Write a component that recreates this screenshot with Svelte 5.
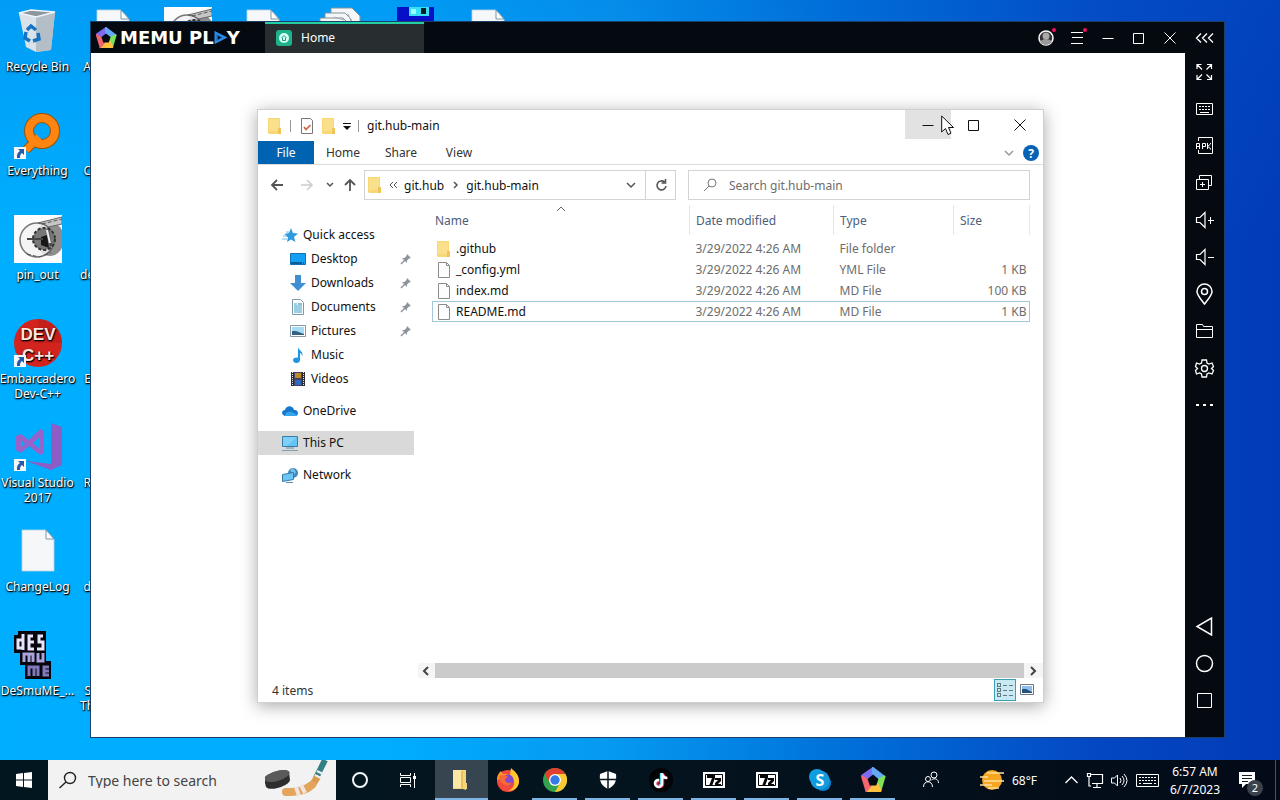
<script lang="ts">
  type Shortcut = { label: string; icon: string; link?: boolean };
  type Place = { label: string; icon: string; pinned?: boolean };
  type Entry = {
    name: string;
    icon: string;
    modified: string;
    kind: string;
    size: string;
  };

  const shortcuts: Shortcut[] = [
    { label: "Recycle Bin", icon: "bin" },
    { label: "Everything", icon: "everything", link: true },
    { label: "pin_out", icon: "photo" },
    { label: "Embarcadero Dev-C++", icon: "devcpp", link: true },
    { label: "Visual Studio 2017", icon: "vs", link: true },
    { label: "ChangeLog", icon: "page" },
    { label: "DeSmuME_...", icon: "desmume" },
  ];

  // second column is mostly covered by the emulator window
  const covered = ["A", "C", "de", "E", "R", "d", "S Th"];
  const topRow = ["photo", "page", "stack", "floppy", "page"];

  const quickAccess: Place[] = [
    { label: "Desktop", icon: "desktop", pinned: true },
    { label: "Downloads", icon: "downloads", pinned: true },
    { label: "Documents", icon: "documents", pinned: true },
    { label: "Pictures", icon: "pictures", pinned: true },
    { label: "Music", icon: "music" },
    { label: "Videos", icon: "videos" },
  ];

  const roots: Place[] = [
    { label: "OneDrive", icon: "onedrive" },
    { label: "This PC", icon: "pc" },
    { label: "Network", icon: "network" },
  ];

  const files: Entry[] = [
    { name: ".github", icon: "folder", modified: "3/29/2022 4:26 AM", kind: "File folder", size: "" },
    { name: "_config.yml", icon: "file", modified: "3/29/2022 4:26 AM", kind: "YML File", size: "1 KB" },
    { name: "index.md", icon: "file", modified: "3/29/2022 4:26 AM", kind: "MD File", size: "100 KB" },
    { name: "README.md", icon: "file", modified: "3/29/2022 4:26 AM", kind: "MD File", size: "1 KB" },
  ];

  const windowTools = ["user", "menu", "minimize", "maximize", "close"];
  const sideTools = ["fullscreen", "keys", "apk", "multi", "volup", "voldown", "pin", "files", "gear", "dots"];
  const navTools = ["back", "home", "recent"];

  const pinnedApps = [
    { name: "explorer", open: true },
    { name: "firefox", open: false },
    { name: "chrome", open: true },
    { name: "shield", open: true },
    { name: "tiktok", open: true },
    { name: "sevenzip", open: true },
    { name: "sevenzip", open: true },
    { name: "skype", open: true },
    { name: "memu", open: true },
  ];

  let current = $state("This PC");
  let selected = $state("README.md");
  let query = $state("");
  let search = $state("");
</script>

{#snippet memuLogo(size: number)}
  <svg width={size} height={size} viewBox="0 0 24 24" aria-hidden="true">
    <path d="M12 1 2 8l5 4 5-4z" fill="#7d6bf0" stroke="#7d6bf0" stroke-width="2" stroke-linejoin="round" />
    <path d="M12 1 22.500 9l-5 4L12 8z" fill="#63a8f5" stroke="#63a8f5" stroke-width="2" stroke-linejoin="round" />
    <path d="M22.500 9 19 21h-5l1-7 3-3z" fill="#7fe05a" stroke="#7fe05a" stroke-width="2" stroke-linejoin="round" />
    <path d="M19 22H6l3-6h7z" fill="#ffc23e" stroke="#ffc23e" stroke-width="2" stroke-linejoin="round" />
    <path d="M6 22 2 9l5 3 3 5z" fill="#f2666e" stroke="#f2666e" stroke-width="2" stroke-linejoin="round" />
    <path d="m12 7 5 4-2 6H9l-2-6z" fill="#050a10" />
  </svg>
{/snippet}

{#snippet desktopIcon(name: string)}
  <svg width="48" height="48" viewBox="0 0 48 48" aria-hidden="true">
    {#if name === "bin"}
      <path d="m5 6 12-3 24 2-4 38-14 2-10-5z" fill="#c9d3db" opacity=".95" />
      <path d="m5 6 17 4v35l-10-5z" fill="#d9e2e8" />
      <path d="m22 10 19-5-4 38-15 2z" fill="#b4bec7" />
      <path d="m5 6 12-3 24 2-19 5z" fill="#8b969e" stroke="#eef5fa" stroke-width="1.500" />
      <g fill="none" stroke="#1673c4" stroke-width="3.500"><path d="m13 23 4-4 5 4M24 26l1 6-6 2M16 34l-5-3 1-6" /></g>
    {:else if name === "everything"}
      <path d="m24 27-12 12" stroke="#9a5208" stroke-width="9" />
      <circle cx="28" cy="20" r="13" fill="none" stroke="#9a5208" stroke-width="10" />
      <path d="m25 26-13 13" stroke="#ff8410" stroke-width="7" />
      <circle cx="28" cy="20" r="13" fill="none" stroke="#ff8410" stroke-width="8" />
    {:else if name === "photo"}
      <path d="M0 0h48v48H0z" fill="#fcfcfc" />
      <ellipse cx="36" cy="24" rx="14" ry="17" fill="#8d8d8d" />
      <path d="m24 8 24-6v7L30 13z" fill="#c6c6c6" stroke="#666" />
      <circle cx="23" cy="25" r="17" fill="#f3f3f3" opacity=".8" stroke="#555" stroke-width="1.500" />
      <circle cx="30" cy="24" r="11" fill="#777" stroke="#333" stroke-dasharray="3 2" stroke-width="2" />
      <path d="m27 22 6-2 2 13-8-3z" fill="#181818" />
      <path d="M13 24h16M34 16l3 15" stroke="#444" stroke-width="2" /><path d="m33 15 3 13" stroke="#eee" stroke-width="2" />
      <path d="m13 39 12 3 12-4M28 9l20-5" fill="none" stroke="#555" stroke-dasharray="4 2" />
    {:else if name === "devcpp"}
      <circle cx="24" cy="24" r="24" fill="#d3231e" />
      <path d="M24 0a24 24 0 0 1 24 24L24 24z" fill="#b81c1a" opacity=".5" />
      <g fill="#ffe5dc" font-family="Liberation Sans, sans-serif" font-weight="700" font-size="17">
        <text x="24" y="21" text-anchor="middle">DEV</text><text x="24" y="42" text-anchor="middle">C++</text>
      </g>
    {:else if name === "vs"}
      <path d="m37 0 11 4v38l-11 5-25-9 25 3z" fill="#8d5cc4" />
      <path d="M2 13 7 11l8 6 11-11 4 2v22l-4 2-11-9-8 7-5-3zM7 17v7l4-3zM26 14l-7 6 7 6z" fill="#9563c9" fill-rule="evenodd" />
    {:else if name === "page"}
      <path d="M8 3h24l8 9v32H8z" fill="#f6f7f8" stroke="#bfd3e0" stroke-width=".8" />
      <path d="M32 3v9h8z" fill="#fff" stroke="#7896a8" />
    {:else if name === "stack"}
      <g fill="#f5f6f7" stroke="#7d93a0"><path d="M17 1h21l8 8v30H17z" /><path d="M11 6h20l6 6v30H11z" /><path d="M6 11h23l5 5v30H6z" /></g>
      <path d="m20 10 10 3M34 7l3 7M24 15h9" stroke="#aaa" />
    {:else if name === "floppy"}
      <path d="M8 0h37v37H8z" fill="#0710c8" /><path d="M20 0h20v9H20z" fill="#35dff5" /><path d="M32 1h5v6h-5z" fill="#022" /><path d="M22 2h5v5h-5z" fill="#9ff" />
    {:else if name === "desmume"}
      <path d="M4 0h28v17h0v13h5v18H11V34H6V22H0V4h4z" fill="#06060c" />
      <g fill="none" stroke="#e6e4fa" stroke-width="3"><path d="M9 3v16M8 9H4v8h4M19 5h-4v13h5M15 11h5M29 5h-4v6h4v7h-6" /></g>
      <g fill="none" stroke="#aaa4dc" stroke-width="3"><path d="M10 31v-8h9v8M15 23v8M24 22v8h5v-8" /></g>
      <g fill="none" stroke="#8079bd" stroke-width="3"><path d="M15 45v-9h9v9M20 36v9M35 36h-5v8h5M30 40h5" /></g>
    {/if}
  </svg>
{/snippet}

{#snippet smallIcon(name: string)}
  <svg width="16" height="16" viewBox="0 0 16 16" aria-hidden="true">
    {#if name === "folder"}
      <path d="M1 0h12v12l1 1v3H2l-1-1z" fill="#f8d775" /><path d="M2 1h10v12H2z" fill="#fbe08c" /><path d="M11 10h3v6h-3z" fill="#f0c35b" />
    {:else if name === "file"}
      <path d="M2.500.5h8l3 3v12h-11z" fill="#fdfdfd" stroke="#8c8c8c" /><path d="M10.500.5v3h3" fill="none" stroke="#8c8c8c" />
    {:else if name === "props"}
      <path d="M2.500.5h9l2 2v13h-11z" fill="#fdfdfd" stroke="#777" /><path d="m5 9 2 2.500L11.500 7" fill="none" stroke="#d2643c" stroke-width="1.700" />
    {:else if name === "star"}
      <path d="m9 1 2 5 5 .5-4 3.500 1.500 5L9 12.500 5 15l1-4.500L2.500 7 7 6z" fill="#2e9be0" /><path d="M1 9h4M0 12h5M4 5h3" stroke="#71c0ee" />
    {:else if name === "desktop"}
      <path d="M.5 2.500h15v11H.5z" fill="#14a0f2" stroke="#1173b5" /><path d="M1 12h14" stroke="#0d5c9a" stroke-width="2" stroke-dasharray="11 1 1 1" />
    {:else if name === "downloads"}
      <path d="M5 0h6v8h5l-8 8-8-8h5z" fill="#3f8fd4" />
    {:else if name === "documents"}
      <path d="M2.500.5h8l3 3v12h-11z" fill="#fcfdfe" stroke="#7f98a8" /><path d="M4 5h3M4 7h8M4 9h8M4 11h8M4 13h8" stroke="#3aa0c6" /><path d="M8 5h4" stroke="#2d7f9e" />
    {:else if name === "pictures"}
      <path d="M.5 2.500h15v11H.5z" fill="#fff" stroke="#8798a5" /><path d="M2 4h12v8H2z" fill="#a6dcf3" /><path d="m2 8 4 0 8 3v1H2z" fill="#37617e" />
    {:else if name === "music"}
      <path d="M8 0c1 4 6 4 4 10 0-3-1-4-2-4v7c0 4-7 4-7 0 0-2 3-3 5-2z" fill="#1e94e3" />
    {:else if name === "videos"}
      <path d="M1 1h14v14H1z" fill="#2b2b33" /><path d="M4 1h8v14H4z" fill="#4a3d66" /><path d="M5 2h6v5H5z" fill="#b98b25" /><path d="M5 9h6v5H5z" fill="#2b6bc0" /><path d="M2.500 1v14M13.500 1v14" stroke="#e8e8e8" stroke-dasharray="1 1" />
    {:else if name === "onedrive"}
      <path d="M4 13C-1 13-1 7 3 7c1-5 8-5 9 0 5-1 5 6 1 6z" fill="#1479cd" /><path d="M3 13c0-4 4-5 7-4l5 3c0 1-1 1-2 1z" fill="#35a6ee" />
    {:else if name === "pc"}
      <path d="M.5 1.500h15v10H.5z" fill="#63c3f6" stroke="#3a7ea8" /><path d="M1 2h14L5 11H1z" fill="#92d9fb" opacity=".6" /><path d="M4 13h8" stroke="#6a8ea5" /><path d="M0 15.500h16" stroke="#7f9fb3" />
    {:else if name === "network"}
      <circle cx="11" cy="6" r="5" fill="#4288bd" /><path d="m8 3 3-2 3 4-2 3z" fill="#79bfe6" /><path d="m.5 7.500 11-2v7l-11 2z" fill="#6cc5f5" stroke="#347ca8" /><path d="M4 15.500h7" stroke="#5b8ba8" />
    {:else if name === "thumb"}
      <path d="M1.500 2.500h13v10h-13z" fill="#fff" stroke="#68788a" /><path d="M3 4h10v7H3z" fill="#8bc0ee" /><path d="m3 7 4 0 6 3v1H3z" fill="#245276" />
    {:else if name === "details"}
      <g fill="none" stroke="#62777f" shape-rendering="crispEdges"><path d="M.5 1.500h3v3h-3zM.5 6.500h3v3h-3zM.5 11.500h3v3h-3z" /><path d="M6 3.500h4M6 8.500h4M6 13.500h4M12 3.500h4M12 8.500h4M12 13.500h4" /></g>
    {/if}
  </svg>
{/snippet}

{#snippet lineIcon(name: string)}
  <svg class="line-icon" width="20" height="20" viewBox="0 0 20 20" aria-hidden="true">
    {#if name === "user"}
      <circle cx="10" cy="10" r="7" fill="#333" stroke-width="1.500" /><circle cx="10" cy="8" r="3.500" fill="#aaa" stroke="none" /><path d="M4 14c2-4 10-4 12 0-3 4-9 4-12 0z" fill="#999" stroke="none" /><circle cx="18" cy="2" r="2" fill="#ef1261" stroke="none" />
    {:else if name === "menu"}
      <path d="M4 4.500h12M5 9.500h11M4 15.500h12" /><circle cx="18" cy="2" r="2" fill="#ef1261" stroke="none" />
    {:else if name === "minimize"}
      <path d="M4.500 10.500h11" />
    {:else if name === "maximize"}
      <path d="M4.500 5.500h10v10h-10z" />
    {:else if name === "close"}
      <path d="m4.500 4.500 11 11m0-11-11 11" />
    {:else if name === "collapse"}
      <path d="M6 5.500 1.500 10 6 14.500M12 5.500 7.500 10l4.500 4.500M18 5.500 13.500 10l4.500 4.500" stroke-width="1.300" />
    {:else if name === "fullscreen"}
      <path d="M3 7V2.500h4.500M3 2.500l5 5M13 2.500h4.500V7m0-4.500-5 5M3 13v4.500h4.500M3 17.500l5-5M13 17.500h4.500V13m0 4.500-5-5" stroke-width="1.200" />
    {:else if name === "keys"}
      <path d="M2.500 4.500h16v11h-16z" /><path d="M5 7.500h11M5 10.500h11" stroke-dasharray="2 1" /><path d="M6 13.500h9" />
    {:else if name === "apk"}
      <path d="M4.500 5V1.500h14v16h-14V14" /><path d="M2.500 13V7.500h3V13M2.500 10.500h3M8.500 13V7.500h3v3h-3M13.500 7v6m3-6v1l-3 2.500 3 2v1" />
    {:else if name === "multi"}
      <path d="M5.500 6V2.500h12v10h-3M2.500 6.500h12v10h-12zM6 11.500h5M8.500 9v5" />
    {:else if name === "volup" || name === "voldown"}
      <path d="M2.500 7.500H6l5-5v15l-5-5H2.500z" stroke-width="1.200" /><path d="M14 10.500h6" />
      {#if name === "volup"}<path d="M16.500 7v7" />{/if}
    {:else if name === "pin"}
      <path d="M10.500 20C5 13 3 11 3 7.500a7.500 7.500 0 0 1 15 0c0 3.500-2 5.500-7.500 12.500z" stroke-width="1.500" /><circle cx="10.500" cy="7.500" r="3" stroke-width="1.500" />
    {:else if name === "files"}
      <path d="M2.500 3.500h6l1 2h9v11h-16zM2.500 8.500h16" />
    {:else if name === "gear"}
      <path d="M8 2h4.500l.5 3 2 1 3-1 1.500 3.500-2 2 2 2L18 16l-3-1-2 1-.5 3H8l-.5-3-2-1-3 1L1.500 12.500l2-2-2-2L2.500 5l3 1 2-1z" stroke-width="1.300" /><circle cx="10.500" cy="10.500" r="3" stroke-width="1.300" />
    {:else if name === "dots"}
      <path d="M2 10h3m4 0h3m4 0h3" stroke-width="2" />
    {:else if name === "back"}
      <path d="M17.500 2v17L3 10.500z" stroke-width="1.500" />
    {:else if name === "home"}
      <circle cx="10.500" cy="10.500" r="8" stroke-width="1.500" />
    {:else if name === "recent"}
      <path d="M3.500 3.500h14v14h-14z" />
    {:else if name === "down"}
      <path d="m6 8 4 4 4-4" stroke-width="1.500" />
    {:else if name === "small-down"}
      <path d="m7 8 3 3 3-3" stroke-width="1.500" />
    {:else if name === "left"}
      <path d="m11 6-4 4 4 4" stroke-width="2" />
    {:else if name === "right"}
      <path d="m8 6 4 4-4 4" stroke-width="2" />
    {:else if name === "arrow-left"}
      <path d="M16 10H5m5-5-5 5 5 5" stroke-width="1.800" />
    {:else if name === "arrow-right"}
      <path d="M4 10h11m-5-5 5 5-5 5" stroke-width="1.500" />
    {:else if name === "arrow-up"}
      <path d="M10 16V5m-5 5 5-5 5 5" stroke-width="1.800" />
    {:else if name === "refresh"}
      <path d="M13.500 7A4.500 4.500 0 1 0 15 11M14.500 4v4h-4" stroke-width="1.600" />
    {:else if name === "search"}
      <circle cx="12" cy="8" r="4" /><path d="m9 11-5 5" />
    {:else if name === "lens"}
      <circle cx="12" cy="8" r="5.500" stroke-width="1.400" /><path d="m8 12-6.500 6" stroke-width="1.400" />
    {:else if name === "chevrons"}
      <path d="M10 7 7 10l3 3M14 7l-3 3 3 3" />
    {:else if name === "crumb"}
      <path d="m9 7 3 3-3 3" stroke-width="1.500" />
    {:else if name === "tray-up"}
      <path d="m4.500 13 6-6 6 6" stroke-width="1.300" />
    {:else if name === "wired"}
      <path d="M5 4.500h12.500v9H7M12 14v3M8 17.500h8M2.500 3.500h3v3h-3zM4 7v9h2" stroke-width="1.200" />
    {:else if name === "sound"}
      <path d="M2.500 8h3l3-3v11l-3-3h-3zM11 8q2 2.500 0 5M13 6q4 4.500 0 9M15 4q6 6.500 0 13" />
    {:else if name === "people"}
      <circle cx="7" cy="9" r="2.500" /><path d="M2.500 17c0-7 9-7 9 0" /><circle cx="13" cy="5" r="3" /><path d="M10.500 10c3-2.500 7-1 7 3" />
    {/if}
  </svg>
{/snippet}

{#snippet appIcon(name: string)}
  {#if name === "memu"}
    {@render memuLogo(26)}
  {:else}
    <svg width="24" height="24" viewBox="0 0 24 24" aria-hidden="true">
      {#if name === "explorer"}
        <path d="M3 2h13v20l-3-1H3z" fill="#f3d37b" /><path d="M3 2h9v18H3z" fill="#fae7a6" /><path d="M11 3h2v17l-2 1z" fill="#e8bf5b" /><path d="M15 15h2v6h-2z" fill="#f3d37b" />
      {:else if name === "firefox"}
        <circle cx="12" cy="13" r="11" fill="#f5483c" /><path d="M15 0c3 3 8 6 8 13S17 23 12 23c8-3 8-12 2-16z" fill="#ffc62e" /><path d="M1 12C1 7 3 5 5 3l2 3h5l-4 4z" fill="#ff962b" /><circle cx="12" cy="12" r="5.500" fill="#8349cb" /><path d="M3 8c3-2 7-1 9 1l-3 2c0 4 4 5 7 3-2 6-12 5-13-6z" fill="#f86a35" />
      {:else if name === "chrome"}
        <circle cx="12" cy="12" r="12" fill="#33a350" /><path d="M1.600 6A12 12 0 0 1 22.400 6H12L7 15z" fill="#e0402f" /><path d="M22.400 6A12 12 0 0 1 12 24l5-9-5-9z" fill="#f9c932" /><circle cx="12" cy="12" r="6" fill="#fff" /><circle cx="12" cy="12" r="4.700" fill="#3579e6" />
      {:else if name === "shield"}
        <path d="m12 3 8 3c1 8-2 12-8 15C6 18 3 14 4 6z" fill="#fff" /><path d="M12 2v20M2 11.500h20" stroke="#07141c" stroke-width="1.500" />
      {:else if name === "tiktok"}
        <circle cx="12" cy="12" r="12" fill="#020305" /><g fill="none" stroke-width="2.500"><path d="M12 5v10a3 3 0 1 1-3-3" stroke="#20dbe2" /><path d="M14 6v10a3 3 0 1 1-3-3M14 6c1 3 3 4 5 4" stroke="#ee2452" /><path d="M13 5v11a3.500 3.500 0 1 1-3-4M13 6c1 3 3 4 5 4" stroke="#fff" /></g>
      {:else if name === "sevenzip"}
        <path d="M1 4h22v16H1z" fill="#fff" /><path d="M3.500 6.500h17v11h-17z" fill="none" stroke="#080808" /><path d="M5 7h8v3l-3 8H7l3-8H5zM13 10h6v3l-3 3h3v2h-6v-3l3-3h-3z" fill="#080808" />
      {:else if name === "skype"}
        <circle cx="9" cy="9" r="8" fill="#0aa2e2" /><circle cx="15" cy="15" r="8" fill="#0782cf" /><circle cx="12" cy="12" r="9.500" fill="#129bdd" /><text x="12" y="18" text-anchor="middle" fill="#fff" font-family="Open Sans, sans-serif" font-size="16" font-weight="700">S</text>
      {/if}
    </svg>
  {/if}
{/snippet}

<div class="screen">
  <main class="desktop">
    <div class="icons">
      <div class="column">
        {#each shortcuts as item (item.label)}
          <button class="shortcut">
            <span class="art">
              {@render desktopIcon(item.icon)}
              {#if item.link}
                <svg class="link" width="12" height="12" viewBox="0 0 12 12" aria-hidden="true">
                  <path d="M0 0h12v12H0z" fill="#f4f8fc" /><path d="M4 2h6v6L8 6c-2 1-2 3-2 5H3c0-3 0-5 3-7z" fill="#2659a8" />
                </svg>
              {/if}
            </span>
            <span>{item.label}</span>
          </button>
        {/each}
      </div>
      <div class="column narrow">
        {#each covered as label, index (label)}
          <button class="shortcut">
            <span class="art">{#if index === 0}{@render desktopIcon("page")}{/if}</span>
            <span>{label}</span>
          </button>
        {/each}
      </div>
      {#each topRow as name, index (index)}
        <div class="column">
          <span class="shortcut">{@render desktopIcon(name)}</span>
        </div>
      {/each}
    </div>

    <section class="emulator">
      <header class="emu-bar">
        <div class="brand">
          {@render memuLogo(22)}
          <span>MEMU PL</span>
          <svg width="13" height="13" viewBox="0 0 13 13" aria-hidden="true"><path d="M1.500 1.500v10l10-5z" fill="#1764b8" stroke="#2c8be8" stroke-width="2" /><path d="m4 5 3 1.500-3 2z" fill="#06101c" /></svg>
          <span>Y</span>
        </div>
        <button class="emu-tab">
          <svg width="16" height="16" viewBox="0 0 16 16" aria-hidden="true"><rect width="16" height="16" rx="3" fill="#1eb28c" /><circle cx="8" cy="8" r="5" fill="#d8fff3" /><path d="m5.500 8 2.500-2.500L10.500 8M6.500 8v2.500h3V8" fill="none" stroke="#1b9d7c" /></svg>
          Home
        </button>
        <div class="emu-tools">
          {#each windowTools as name (name)}
            <button aria-label={name}>{@render lineIcon(name)}</button>
          {/each}
          <button class="wide" aria-label="collapse">{@render lineIcon("collapse")}</button>
        </div>
      </header>

      <div class="emu-body">
        <div class="emu-stage">
          <section class="explorer">
            <header class="titlebar">
              {@render smallIcon("folder")}
              <i class="rule"></i>
              {@render smallIcon("props")}
              {@render smallIcon("folder")}
              <svg class="drop" width="8" height="8" viewBox="0 0 8 8" aria-hidden="true"><path d="M0 1.500h8" stroke="#111" /><path d="M0 4h8L4 8z" fill="#111" /></svg>
              <i class="rule"></i>
              <span>git.hub-main</span>
              <div class="controls">
                <button class="hovered" aria-label="Minimize">{@render lineIcon("minimize")}</button>
                <button aria-label="Maximize">{@render lineIcon("maximize")}</button>
                <button aria-label="Close">{@render lineIcon("close")}</button>
              </div>
            </header>

            <nav class="ribbon">
              <button class="file">File</button>
              <button>Home</button>
              <button>Share</button>
              <button>View</button>
              <button class="expand" aria-label="Expand ribbon">{@render lineIcon("down")}</button>
              <button class="help" aria-label="Help">?</button>
            </nav>

            <div class="address-row">
              <div class="history">
                <button aria-label="Back">{@render lineIcon("arrow-left")}</button>
                <button class="off" aria-label="Forward">{@render lineIcon("arrow-right")}</button>
                <button class="recent" aria-label="Recent locations">{@render lineIcon("small-down")}</button>
                <button aria-label="Up">{@render lineIcon("arrow-up")}</button>
              </div>
              <div class="address">
                {@render smallIcon("folder")}
                {@render lineIcon("chevrons")}
                <button class="crumb">git.hub</button>
                {@render lineIcon("crumb")}
                <button class="crumb">git.hub-main</button>
                <button class="more" aria-label="Previous locations">{@render lineIcon("down")}</button>
                <button class="refresh" aria-label="Refresh">{@render lineIcon("refresh")}</button>
              </div>
              <label class="find">
                {@render lineIcon("search")}
                <input bind:value={query} placeholder="Search git.hub-main" aria-label="Search git.hub-main" />
              </label>
            </div>

            <div class="panes">
              <nav class="tree">
                <button class="place">{@render smallIcon("star")}Quick access</button>
                {#each quickAccess as place (place.label)}
                  <button class="place child" class:active={current === place.label} onclick={() => (current = place.label)}>
                    {@render smallIcon(place.icon)}{place.label}
                    {#if place.pinned}
                      <svg class="pinned" width="12" height="12" viewBox="0 0 12 12" aria-hidden="true"><path d="m7 1 4 4-2 .5-2 2V10L2 5h2.500l2-2z" fill="#8b949c" /><path d="m5 7-4 4" stroke="#8b949c" stroke-width="1.500" /></svg>
                    {/if}
                  </button>
                {/each}
                {#each roots as place (place.label)}
                  <button class="place root" class:active={current === place.label} onclick={() => (current = place.label)}>
                    {@render smallIcon(place.icon)}{place.label}
                  </button>
                {/each}
              </nav>

              <div class="listing">
                <table>
                  <colgroup><col /><col class="c-date" /><col class="c-type" /><col class="c-size" /></colgroup>
                  <thead>
                    <tr>
                      <th>Name <svg class="sort" width="10" height="6" viewBox="0 0 10 6" aria-hidden="true"><path d="m1 5 4-4 4 4" fill="none" stroke="#666" /></svg></th>
                      <th>Date modified</th>
                      <th>Type</th>
                      <th>Size</th>
                    </tr>
                  </thead>
                  <tbody>
                    {#each files as file (file.name)}
                      <tr class:selected={selected === file.name} onclick={() => (selected = file.name)}>
                        <td><span class="name">{@render smallIcon(file.icon)}{file.name}</span></td>
                        <td>{file.modified}</td>
                        <td>{file.kind}</td>
                        <td class="size">{file.size}</td>
                      </tr>
                    {/each}
                  </tbody>
                </table>
                <div class="scrollbar">
                  <button aria-label="Scroll left">{@render lineIcon("left")}</button>
                  <div class="thumb"></div>
                  <button aria-label="Scroll right">{@render lineIcon("right")}</button>
                </div>
              </div>
            </div>

            <footer class="status">
              <span>4 items</span>
              <button class="view on" aria-label="Details view">{@render smallIcon("details")}</button>
              <button class="view" aria-label="Thumbnail view">{@render smallIcon("thumb")}</button>
            </footer>

            <svg class="cursor" width="13" height="21" viewBox="0 0 13 21" aria-hidden="true">
              <path d="M.7 1v16l3.800-3.500L7 19.500l3-1.300-2.500-5.700h5z" fill="#fff" stroke="#111" />
            </svg>
          </section>
        </div>

        <aside class="emu-side">
          {#each sideTools as name (name)}
            <button aria-label={name}>{@render lineIcon(name)}</button>
          {/each}
          <div class="spacer"></div>
          {#each navTools as name (name)}
            <button aria-label={name}>{@render lineIcon(name)}</button>
          {/each}
        </aside>
      </div>
    </section>
  </main>

  <footer class="taskbar">
    <button class="slot" aria-label="Start">
      <svg width="16" height="16" viewBox="0 0 16 16" aria-hidden="true"><path d="m0 2 7-1v6.500H0zM8 1l8-1v7.500H8zM0 8.500h7V15l-7-1zM8 8.500h8V16l-8-1z" fill="#fff" /></svg>
    </button>
    <label class="search">
      {@render lineIcon("lens")}
      <input bind:value={search} placeholder="Type here to search" aria-label="Type here to search" />
      <svg width="68" height="40" viewBox="0 0 68 40" aria-hidden="true">
        <path d="M-1 19c0-5 22-12 25-7l1 8c-1 6-20 12-24 7z" fill="#2d2d2e" /><ellipse cx="12" cy="16" rx="13" ry="5" transform="rotate(-16 12 16)" fill="#5b5a5b" />
        <path d="M60 0 51 18" stroke="#357f87" stroke-width="6" /><path d="M53 16 48 24 38 30" fill="none" stroke="#d99b50" stroke-width="7" />
        <path d="M47 25q-9 8-26 7" fill="none" stroke="#e3a45c" stroke-width="8" stroke-linecap="round" /><path d="m31 27 3 9M36 25l4 8" stroke="#f1e3dd" stroke-width="4" /><path d="m52 11 6 3M50 15l6 3" stroke="#eee" stroke-width="2" />
      </svg>
    </label>
    <button class="slot" aria-label="Cortana">
      <svg width="18" height="18" viewBox="0 0 18 18" aria-hidden="true"><circle cx="9" cy="9" r="7" fill="none" stroke="#f2f5f6" stroke-width="2" /></svg>
    </button>
    <button class="slot" aria-label="Task view">
      <svg width="18" height="18" viewBox="0 0 18 18" aria-hidden="true"><path d="M1.500 2v2.500h10V2M1.500 16v-2.500h10V16M1.500 6.500h10v5h-10zM15.500 2v15" fill="none" stroke="#fff" /><path d="M14 5h3v3h-3z" fill="#fff" /></svg>
    </button>
    <div class="apps">
      {#each pinnedApps as app, index (index)}
        <button class="app" class:open={app.open} class:front={app.name === "explorer"} aria-label={app.name}>{@render appIcon(app.name)}</button>
      {/each}
    </div>
    <button class="slot people" aria-label="People">{@render lineIcon("people")}</button>
    <button class="weather">
      <svg width="24" height="24" viewBox="0 0 24 24" aria-hidden="true"><circle cx="12" cy="12" r="10" fill="#f6a71f" /><path d="M7 5h17M0 9h8M4 13h20M0 17h12M8 20h11" stroke="#ffe1a0" stroke-width="1.500" /></svg>
      68°F
    </button>
    <button class="tray" aria-label="Hidden icons">{@render lineIcon("tray-up")}</button>
    <button class="tray" aria-label="Network">{@render lineIcon("wired")}</button>
    <button class="tray" aria-label="Volume">{@render lineIcon("sound")}</button>
    <button class="tray touch" aria-label="Touch keyboard">
      <svg width="23" height="13" viewBox="0 0 23 13" aria-hidden="true"><g fill="none" stroke="#fff"><path d="M.5.5h22v12H.5z" /><path d="M3 3.500h17M3 6.500h17" stroke-dasharray="2 1" /><path d="M3 9.500h2M7 9.500h9M18 9.500h2" /></g></svg>
    </button>
    <button class="clock"><span>6:57 AM</span><span>6/7/2023</span></button>
    <button class="slot notices" aria-label="Notifications">
      <svg width="18" height="18" viewBox="0 0 18 18" aria-hidden="true"><path d="M1 1h16v12H8l-4 4v-4H1z" fill="#fff" /><path d="M4 4.500h10M4 7.500h10M4 10.500h6" stroke="#111c24" /></svg>
      <span class="badge">2</span>
    </button>
    <button class="peek" aria-label="Show desktop"></button>
  </footer>
</div>

<style>
  :global(body) {
    margin: 0;
  }

  .screen {
    height: 100vh;
    display: flex;
    flex-direction: column;
    overflow: hidden;
    font-family: "Noto Sans", "Open Sans", sans-serif;
    font-size: 12px;
    line-height: 15px;
    color: #111;
  }

  button,
  input {
    border: 0;
    padding: 0;
    background: none;
    color: inherit;
    font: inherit;
  }

  input {
    min-width: 0;
    outline: none;
  }

  svg {
    display: block;
    flex: none;
  }

  .line-icon {
    fill: none;
    stroke: currentColor;
    overflow: visible;
  }

  .desktop {
    position: relative;
    flex: 1;
    min-height: 0;
    overflow: hidden;
    background:
      linear-gradient(180deg, rgb(0 95 210 / 0.22), transparent 32%),
      linear-gradient(90deg, #00aeff 0%, #00adff 30%, #0699f0 48%, #0070d9 66%, #0447c3 86%, #023bb7 100%);
  }

  .icons {
    display: flex;
    padding-top: 7px;
  }

  .column {
    width: 75px;
    flex: none;
  }

  .shortcut {
    width: 100%;
    height: 104px;
    display: flex;
    flex-direction: column;
    align-items: center;
    gap: 4px;
    color: #fff;
    text-shadow:
      0 1px 2px #000,
      1px 1px 1px #000;
  }

  .art {
    position: relative;
    min-height: 48px;
  }

  .link {
    position: absolute;
    left: 0;
    bottom: 0;
  }

  .narrow .shortcut > span:last-child {
    width: 11px;
    align-self: flex-start;
    margin-left: 5px;
    text-align: right;
  }

  .emulator {
    position: absolute;
    inset: 21px 55px 22px 90px;
    display: flex;
    flex-direction: column;
    border: 1px solid #1b3f66;
    background: #050a10;
    color: #fff;
  }

  .emu-bar {
    height: 31px;
    flex: none;
    display: flex;
  }

  .brand {
    width: 174px;
    display: flex;
    align-items: center;
    padding-left: 4px;
    box-sizing: border-box;
    font: 700 18px/20px "DejaVu Sans", sans-serif;
  }

  .brand svg:first-child {
    margin-right: 3px;
  }

  .emu-tab {
    width: 159px;
    display: flex;
    align-items: center;
    gap: 9px;
    padding: 0 0 2px 11px;
    box-sizing: border-box;
    border-top: 2px solid #24cfa6;
    background: #282d30;
  }

  .emu-tools {
    margin-left: auto;
    display: flex;
  }

  .emu-tools button {
    width: 31px;
    display: grid;
    place-items: center;
  }

  .emu-tools .wide {
    width: 39px;
  }

  .emu-body {
    flex: 1;
    min-height: 0;
    display: flex;
  }

  .emu-stage {
    position: relative;
    flex: 1;
    overflow: hidden;
    background: #fff;
    color: #111;
  }

  .emu-side {
    width: 38px;
    display: flex;
    flex-direction: column;
    padding: 0 1px 19px 0;
  }

  .emu-side button {
    height: 37px;
    display: grid;
    place-items: center;
    align-content: center;
  }

  .spacer {
    flex: 1;
  }

  .explorer {
    position: absolute;
    inset: 56px 141px 34px 166px;
    display: flex;
    flex-direction: column;
    border: 1px solid #d0d0d0;
    box-sizing: border-box;
    background: #fff;
    box-shadow: 0 3px 16px rgb(0 0 0 / 0.34);
  }

  .titlebar {
    height: 31px;
    flex: none;
    display: flex;
    align-items: center;
    padding-left: 9px;
  }

  .rule {
    width: 1px;
    height: 12px;
    margin: 0 8px 0 7px;
    background: #999;
  }

  .titlebar > svg + svg {
    margin-left: 6px;
  }

  .controls {
    margin-left: auto;
    align-self: stretch;
    display: flex;
  }

  .controls button {
    width: 46px;
    height: 29px;
    display: grid;
    place-items: center;
  }

  .controls .hovered {
    background: #e2e2e2;
  }

  .ribbon {
    height: 23px;
    flex: none;
    display: flex;
    border-bottom: 1px solid #dcdcdc;
    color: #333;
  }

  .ribbon button {
    width: 58px;
  }

  .ribbon .file {
    width: 56px;
    background: #0063b1;
    color: #fff;
  }

  .ribbon .expand {
    width: 20px;
    margin-left: auto;
    color: #999;
  }

  .ribbon .help {
    width: 16px;
    height: 16px;
    margin: 4px 4px 0 4px;
    border-radius: 50%;
    background: #0a62b5;
    color: #fff;
    font-weight: 700;
  }

  .address-row {
    flex: none;
    display: flex;
    align-items: center;
    padding: 5px 13px 5px 9px;
  }

  .history {
    width: 97px;
    display: flex;
    align-items: center;
    color: #555;
  }

  .history .off {
    margin: 0 3px 0 10px;
    color: #ccc;
  }

  .address {
    flex: 1;
    height: 28px;
    display: flex;
    align-items: center;
    padding-left: 2px;
    border: 1px solid #d3d3d3;
    color: #555;
  }

  .crumb {
    padding: 0 1px;
    color: #111;
  }

  .more {
    margin-left: auto;
  }

  .refresh {
    align-self: stretch;
    width: 30px;
    display: grid;
    place-items: center;
    margin-left: 4px;
    border-left: 1px solid #d3d3d3;
  }

  .find {
    width: 342px;
    height: 30px;
    display: flex;
    align-items: center;
    gap: 9px;
    margin-left: 12px;
    padding-left: 11px;
    box-sizing: border-box;
    border: 1px solid #d3d3d3;
    color: #777;
  }

  .find input {
    flex: 1;
  }

  .find input::placeholder {
    color: #6d6d6d;
    opacity: 1;
  }

  .panes {
    flex: 1;
    min-height: 0;
    display: flex;
  }

  .tree {
    width: 156px;
    padding-top: 18px;
  }

  .place {
    width: 100%;
    height: 24px;
    display: flex;
    align-items: center;
    gap: 5px;
    padding: 0 0 1px 24px;
  }

  .place.child {
    padding-left: 32px;
  }

  .place.root {
    margin-top: 8px;
  }

  .place.active {
    background: #d9d9d9;
  }

  .pinned {
    margin: 0 2px 0 auto;
  }

  .listing {
    flex: 1;
    min-width: 0;
    display: flex;
    flex-direction: column;
    justify-content: space-between;
    margin-left: 4px;
  }

  table {
    margin: 0 13px 0 14px;
    table-layout: fixed;
    border-collapse: collapse;
    color: #6d6d6d;
  }

  .c-date {
    width: 144px;
  }

  .c-type {
    width: 120px;
  }

  .c-size {
    width: 76px;
  }

  th {
    position: relative;
    height: 30px;
    padding: 0 0 0 6px;
    border-right: 1px solid #e6e6e6;
    color: #4c607a;
    font-weight: 400;
    text-align: left;
  }

  th:first-child {
    padding-left: 3px;
  }

  .sort {
    position: absolute;
    top: 1px;
    left: calc(50% - 5px);
  }

  tbody::before {
    content: "";
    display: block;
    height: 3px;
  }

  td {
    height: 21px;
    padding: 0 0 0 6px;
  }

  td:first-child {
    padding-left: 4px;
    color: #111;
  }

  td.size {
    padding-right: 3px;
    text-align: right;
  }

  tr.selected {
    outline: 1px solid #9fc9d6;
    outline-offset: -1px;
  }

  .name {
    display: flex;
    align-items: center;
    gap: 4px;
  }

  .scrollbar {
    height: 15px;
    display: flex;
    padding-right: 2px;
    background: #f5f5f5;
    color: #444;
  }

  .scrollbar button {
    width: 17px;
    height: 15px;
    display: flex;
    align-items: center;
    justify-content: center;
  }

  .thumb {
    flex: 1;
    background: #cbcbcb;
  }

  .status {
    height: 24px;
    flex: none;
    display: flex;
    align-items: center;
    padding: 0 5px 0 14px;
    color: #333;
  }

  .status span {
    margin-right: auto;
  }

  .view {
    width: 22px;
    height: 22px;
    display: grid;
    place-items: center;
  }

  .view.on {
    border: 1px solid #3aa1b4;
    background: #c9eaf5;
  }

  .cursor {
    position: absolute;
    top: 5px;
    right: 89px;
  }

  .taskbar {
    height: 40px;
    flex: none;
    display: flex;
    align-items: stretch;
    background: linear-gradient(90deg, #02161f, #04141e 50%, #030a18);
    color: #fff;
  }

  .slot {
    width: 48px;
    display: grid;
    place-items: center;
  }

  .search {
    width: 288px;
    display: flex;
    align-items: center;
    gap: 10px;
    padding: 0 3px 0 10px;
    box-sizing: border-box;
    background: #f2f2f2;
    color: #222;
    font-size: 14px;
  }

  .search input {
    flex: 1;
  }

  .search input::placeholder {
    color: #444;
    opacity: 1;
  }

  .apps {
    display: flex;
    margin-left: 3px;
  }

  .app {
    width: 40px;
    display: grid;
    place-items: center;
  }

  .app.open {
    width: 53px;
    background: linear-gradient(#7db4e6, #7db4e6) center bottom / 45px 2px no-repeat;
  }

  .app.front {
    background: linear-gradient(#7db4e6, #7db4e6) center bottom / 53px 2px no-repeat #36454f;
  }

  .people {
    margin: 0 16px 0 auto;
  }

  .weather {
    width: 88px;
    display: flex;
    align-items: center;
    gap: 8px;
    padding-left: 9px;
    box-sizing: border-box;
  }

  .tray {
    width: 24px;
    display: grid;
    place-items: center;
  }

  .tray.touch {
    width: 32px;
  }

  .clock {
    width: 64px;
    display: flex;
    flex-direction: column;
    align-items: center;
    justify-content: center;
    gap: 3px;
  }

  .notices {
    position: relative;
    padding-right: 8px;
    box-sizing: border-box;
  }

  .badge {
    position: absolute;
    right: 12px;
    bottom: 4px;
    width: 16px;
    height: 16px;
    border-radius: 50%;
    background: #3c424b;
    font-size: 11px;
    line-height: 16px;
  }

  .peek {
    width: 5px;
    border-left: 1px solid #4b5563;
  }
</style>
